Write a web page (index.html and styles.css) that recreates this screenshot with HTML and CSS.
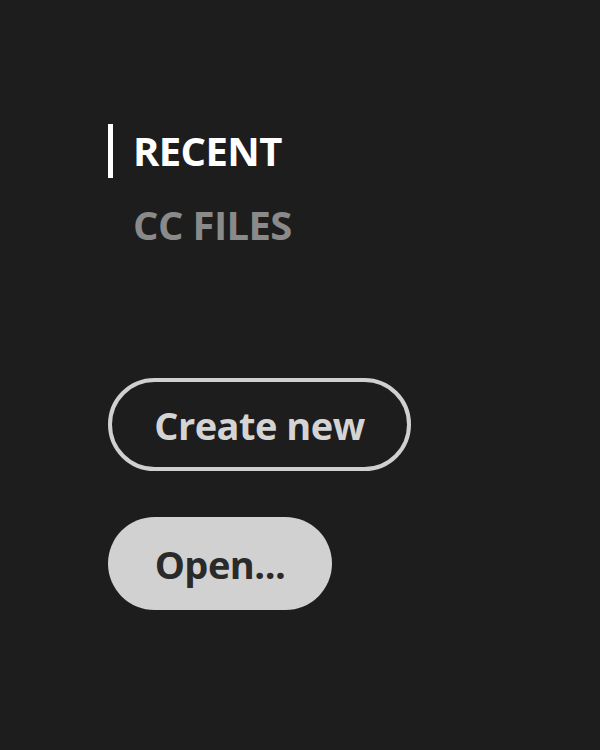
FILE: index.html
```html
<!DOCTYPE html>
<html>
<head>
<meta charset="utf-8">
<link rel="stylesheet" href="styles.css">
</head>
<body>
<div class="panel">
  <nav class="tabs">
    <div class="tab active">RECENT</div>
    <div class="tab">CC FILES</div>
  </nav>
  <div class="actions">
    <button class="btn btn-outline">Create new</button>
    <button class="btn btn-solid">Open...</button>
  </div>
</div>
</body>
</html>
```
FILE: styles.css
```css
html, body {
  margin: 0;
  padding: 0;
  background: #1d1d1d;
  height: 100%;
}
.panel {
  padding: 124px 0 0 108px;
  font-family: "Open Sans", "Noto Sans", sans-serif;
  font-weight: 700;
}
.tabs {
  display: flex;
  flex-direction: column;
  gap: 20px;
}
.tab {
  font-size: 40px;
  line-height: 54px;
  letter-spacing: -0.6px;
  padding-left: 20px;
  border-left: 5px solid transparent;
  color: #8a8a8a;
}
.tab.active {
  color: #ffffff;
  border-left-color: #ffffff;
}
.actions {
  margin-top: 126px;
  display: flex;
  flex-direction: column;
  align-items: flex-start;
  gap: 46px;
}
.btn {
  font-family: inherit;
  font-weight: 700;
  font-size: 38px;
  letter-spacing: -0.5px;
  height: 93px;
  border-radius: 47px;
  box-sizing: border-box;
  padding: 0;
  white-space: nowrap;
  display: flex;
  align-items: center;
  justify-content: center;
  cursor: pointer;
}
.btn-outline {
  background: transparent;
  color: #d4d4d4;
  border: 4px solid #d0d0d0;
  width: 303px;
}
.btn-solid {
  background: #d1d1d1;
  color: #2a2a2a;
  border: none;
  width: 224px;
}
```
